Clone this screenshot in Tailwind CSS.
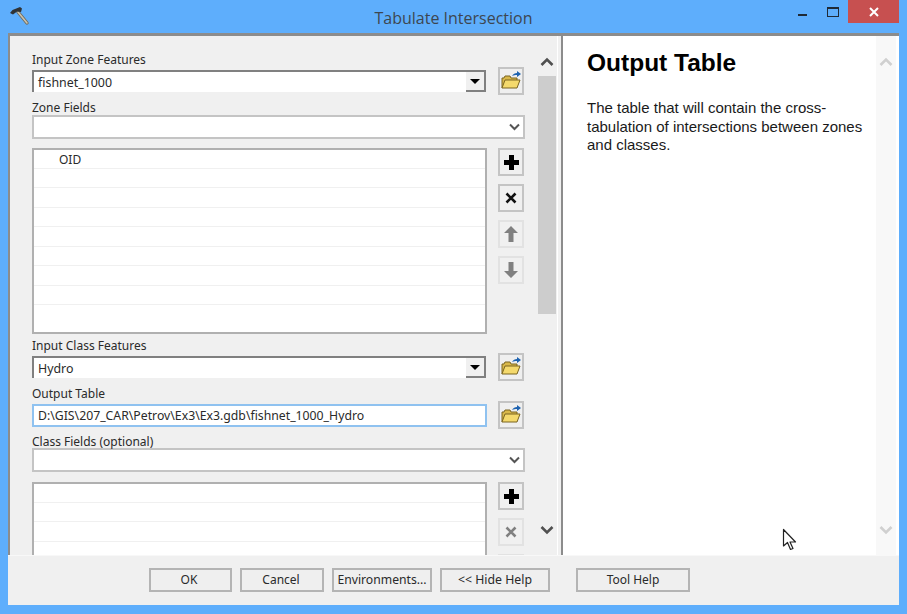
<!DOCTYPE html>
<html lang="en">
<head>
    <meta charset="UTF-8">
    <title>Tabulate Intersection</title>
    <script src="https://cdn.jsdelivr.net/npm/@tailwindcss/browser@4"></script>
</head>
<body class="bg-[#5eaefc]">
<div class="relative w-[907px] h-[614px] overflow-hidden bg-[#5eaefc] font-['Noto_Sans',sans-serif] text-[12px] text-[#2a2a2a]">

    <!-- title bar -->
    <div class="relative h-[33px] flex justify-center">
        <svg class="absolute left-[9px] top-[6px] w-[21px] h-[20px]" viewBox="0 0 21 20">
            <path d="M9 6l9 11" stroke="#6f6a5c" stroke-width="3.400" stroke-linecap="round"/>
            <path d="M9 6l9 11" stroke="#c9c4b0" stroke-width="1.600" stroke-linecap="round"/>
            <path d="M1 7l2.500-3L11 1l2 1.500L12 6 8 5.500 4 8.500z" fill="#2f3336"/>
        </svg>
        <span class="mt-[7px] font-['Open_Sans',sans-serif] text-[16px] leading-[22px] text-[#3d4650]">Tabulate Intersection</span>
        <div class="absolute left-[798px] top-[14px] w-[9px] h-[2px] bg-[#1f2a36]"></div>
        <div class="absolute left-[827px] top-[7px] w-[12px] h-[10px] border border-[#1f2a36] border-t-[2px]"></div>
        <div class="absolute left-[848px] top-0 w-[51px] h-[23px] bg-[#c75050] flex items-center justify-center">
            <svg class="w-[10px] h-[10px]" viewBox="0 0 10 10"><path d="M1 1l8 8M9 1l-8 8" stroke="#fff" stroke-width="2"/></svg>
        </div>
    </div>

    <!-- client area -->
    <div class="ml-[8px] w-[891px] h-[572px] flex flex-col bg-[#f0f0f0]">
        <div class="h-[522px] flex border-t-[3px] border-l-[2px] border-[#8c8c8c]">

            <!-- form pane -->
            <div class="w-[548px] h-[519px] flex overflow-hidden border-r border-white">
                <div class="w-[528px] pl-[22px] pt-[17px]">
                    <div class="h-[14px] leading-[14px]">Input Zone Features</div>
                    <div class="flex items-center gap-[12px] h-[28px]">
                        <div class="w-[454px] h-[22px] flex border-t-2 border-l-2 border-[#808080] bg-white">
                            <span class="flex-1 pl-[4px] text-[12.400px] leading-[21px]">fishnet_1000</span>
                            <div class="w-[20px] flex items-center justify-center bg-[#f0f0f0] border-r-2 border-b-2 border-[#808080]">
                                <div class="w-0 h-0 border-x-[5px] border-x-transparent border-t-[5px] border-t-black"></div>
                            </div>
                        </div>
                        <div class="w-[26px] h-[28px] flex items-center justify-center bg-[#efefef] border-2 border-[#c4c4c4]">
                            <svg class="w-[20px] h-[20px]" viewBox="0 0 20 20"><path d="M1 17V7h2l1-2h5l1 2h6v3" fill="#d9b84a" stroke="#7a6420"/><path d="M1 17l3-8h15l-3 8z" fill="#f4d96c" stroke="#7a6420"/><path d="M11 5c1-2 3-3 5-3V0l4 3-4 3V4c-2 0-3 0-5 1z" fill="#1d62b0"/></svg>
                        </div>
                    </div>
                    <div class="h-[14px] mt-[6px] leading-[14px]">Zone Fields</div>
                    <div class="w-[493px] h-[24px] flex items-center justify-end pr-[3px] bg-white border-2 border-[#c4c4c4]">
                        <svg class="w-[11px] h-[8px]" viewBox="0 0 11 8"><path d="M1 1.500l4.500 4.500L10 1.500" fill="none" stroke="#555" stroke-width="2"/></svg>
                    </div>
                    <div class="flex gap-[11px] mt-[9px] h-[186px]">
                        <div class="w-[455px] border-2 border-[#b0b0b0] bg-white overflow-hidden">
                            <div class="h-[18.500px] pl-[25px] leading-[20px] border-b border-[#f0f0f0]">OID</div>
                            <div class="h-[19.500px] border-b border-[#f0f0f0]"></div>
                            <div class="h-[19.500px] border-b border-[#f0f0f0]"></div>
                            <div class="h-[19.500px] border-b border-[#f0f0f0]"></div>
                            <div class="h-[19.500px] border-b border-[#f0f0f0]"></div>
                            <div class="h-[19.500px] border-b border-[#f0f0f0]"></div>
                            <div class="h-[19.500px] border-b border-[#f0f0f0]"></div>
                            <div class="h-[19.500px] border-b border-[#f0f0f0]"></div>
                        </div>
                        <div class="flex flex-col gap-[8px]">
                            <div class="w-[26px] h-[28px] flex items-center justify-center border-2 border-[#c4c4c4]">
                                <svg class="w-[17px] h-[17px]" viewBox="0 0 17 17"><path d="M8.500 1v15M1 8.500h15" stroke="#000" stroke-width="5"/></svg>
                            </div>
                            <div class="w-[26px] h-[28px] flex items-center justify-center border-2 border-[#c4c4c4]">
                                <svg class="w-[12px] h-[12px]" viewBox="0 0 12 12"><path d="M1.500 1.500l9 9M10.500 1.500l-9 9" stroke="#111" stroke-width="2.600"/></svg>
                            </div>
                            <div class="w-[26px] h-[28px] flex items-center justify-center border-2 border-[#e2e2e2]">
                                <svg class="w-[14px] h-[16px]" viewBox="0 0 14 16"><path d="M7 0l7 7H9.500v9h-5V7H0z" fill="#808080"/></svg>
                            </div>
                            <div class="w-[26px] h-[28px] flex items-center justify-center border-2 border-[#e2e2e2]">
                                <svg class="w-[14px] h-[16px]" viewBox="0 0 14 16"><path d="M7 16L0 9h4.500V0h5v9H14z" fill="#808080"/></svg>
                            </div>
                        </div>
                    </div>
                    <div class="h-[14px] mt-[5px] leading-[14px]">Input Class Features</div>
                    <div class="flex items-center gap-[12px] h-[28px]">
                        <div class="w-[454px] h-[22px] flex border-t-2 border-l-2 border-[#808080] bg-white">
                            <span class="flex-1 pl-[4px] text-[12.400px] leading-[21px]">Hydro</span>
                            <div class="w-[20px] flex items-center justify-center bg-[#f0f0f0] border-r-2 border-b-2 border-[#808080]">
                                <div class="w-0 h-0 border-x-[5px] border-x-transparent border-t-[5px] border-t-black"></div>
                            </div>
                        </div>
                        <div class="w-[26px] h-[28px] flex items-center justify-center bg-[#efefef] border-2 border-[#c4c4c4]">
                            <svg class="w-[20px] h-[20px]" viewBox="0 0 20 20"><path d="M1 17V7h2l1-2h5l1 2h6v3" fill="#d9b84a" stroke="#7a6420"/><path d="M1 17l3-8h15l-3 8z" fill="#f4d96c" stroke="#7a6420"/><path d="M11 5c1-2 3-3 5-3V0l4 3-4 3V4c-2 0-3 0-5 1z" fill="#1d62b0"/></svg>
                        </div>
                    </div>
                    <div class="h-[14px] mt-[6px] leading-[14px]">Output Table</div>
                    <div class="flex items-center gap-[11px] h-[28px]">
                        <div class="w-[455px] h-[23px] pl-[4px] text-[12.250px] leading-[19px] bg-white border-2 border-[#8fc2f0]">D:\GIS\207_CAR\Petrov\Ex3\Ex3.gdb\fishnet_1000_Hydro</div>
                        <div class="w-[26px] h-[28px] flex items-center justify-center bg-[#efefef] border-2 border-[#c4c4c4]">
                            <svg class="w-[20px] h-[20px]" viewBox="0 0 20 20"><path d="M1 17V7h2l1-2h5l1 2h6v3" fill="#d9b84a" stroke="#7a6420"/><path d="M1 17l3-8h15l-3 8z" fill="#f4d96c" stroke="#7a6420"/><path d="M11 5c1-2 3-3 5-3V0l4 3-4 3V4c-2 0-3 0-5 1z" fill="#1d62b0"/></svg>
                        </div>
                    </div>
                    <div class="h-[13px] mt-[6px] leading-[14px]">Class Fields (optional)</div>
                    <div class="w-[493px] h-[24px] flex items-center justify-end pr-[3px] bg-white border-2 border-[#c4c4c4]">
                        <svg class="w-[11px] h-[8px]" viewBox="0 0 11 8"><path d="M1 1.500l4.500 4.500L10 1.500" fill="none" stroke="#555" stroke-width="2"/></svg>
                    </div>
                    <div class="flex gap-[11px] mt-[10px] h-[186px]">
                        <div class="w-[455px] border-2 border-[#b0b0b0] bg-white overflow-hidden">
                            <div class="h-[18.500px] border-b border-[#f0f0f0]"></div>
                            <div class="h-[19.500px] border-b border-[#f0f0f0]"></div>
                            <div class="h-[19.500px] border-b border-[#f0f0f0]"></div>
                        </div>
                        <div class="flex flex-col gap-[8px]">
                            <div class="w-[26px] h-[28px] flex items-center justify-center border-2 border-[#c4c4c4]">
                                <svg class="w-[17px] h-[17px]" viewBox="0 0 17 17"><path d="M8.500 1v15M1 8.500h15" stroke="#000" stroke-width="5"/></svg>
                            </div>
                            <div class="w-[26px] h-[28px] flex items-center justify-center border-2 border-[#e2e2e2]">
                                <svg class="w-[12px] h-[12px]" viewBox="0 0 12 12"><path d="M1.500 1.500l9 9M10.500 1.500l-9 9" stroke="#808080" stroke-width="2.600"/></svg>
                            </div>
                            <div class="w-[26px] h-[28px] border-2 border-[#e2e2e2]"></div>
                        </div>
                    </div>
                </div>

                <!-- form scrollbar -->
                <div class="w-[19px] flex flex-col items-start">
                    <div class="w-[18px] h-[40px] flex items-center justify-center pt-[11px]">
                        <svg class="w-[14px] h-[10px]" viewBox="0 0 14 10"><path d="M1.500 8L7 2.500 12.500 8" fill="none" stroke="#505050" stroke-width="2.600"/></svg>
                    </div>
                    <div class="w-[18px] h-[238px] bg-[#cdcdcd]"></div>
                    <div class="w-[18px] h-[241px] flex items-center justify-center pt-[191px]">
                        <svg class="w-[14px] h-[10px]" viewBox="0 0 14 10"><path d="M1.500 2L7 7.500 12.500 2" fill="none" stroke="#505050" stroke-width="2.600"/></svg>
                    </div>
                </div>
            </div>

            <div class="w-[3px]"></div>

            <!-- help pane -->
            <div class="flex-1 h-[519px] flex bg-white border-l-2 border-[#8c8c8c]">
                <div class="w-[313px] pl-[24px] font-['Liberation_Sans',sans-serif] text-[15px] text-[#1a1a1a]">
                    <h1 class="mt-[13px] text-[24.500px] leading-[28px] font-bold text-black">Output Table</h1>
                    <p class="mt-[22px] w-[282px] leading-[18.500px]">The table that will contain the cross-tabulation of intersections between zones and classes.</p>
                </div>
                <div class="w-[20px] flex flex-col items-center justify-between pt-[21px] pb-[20px] bg-[#f8f8f8]">
                    <svg class="w-[14px] h-[10px]" viewBox="0 0 14 10"><path d="M1.500 8L7 2.500 12.500 8" fill="none" stroke="#d0d0d0" stroke-width="2.600"/></svg>
                    <svg class="w-[14px] h-[10px]" viewBox="0 0 14 10"><path d="M1.500 2L7 7.500 12.500 2" fill="none" stroke="#d0d0d0" stroke-width="2.600"/></svg>
                </div>
                <div class="w-[1px] bg-white"></div>
            </div>
        </div>

        <!-- footer buttons -->
        <div class="flex-1 flex pl-[141px] pt-[12px] border-t border-[#f8f8f8]">
            <button class="w-[83px] h-[24px] pr-[3px] border-2 border-[#b4b4b4] bg-[#efefef] text-center leading-[20px]">OK</button>
            <button class="ml-[8px] w-[84px] h-[24px] pr-[2px] border-2 border-[#b4b4b4] bg-[#efefef] text-center leading-[20px]">Cancel</button>
            <button class="ml-[8px] w-[100px] h-[24px] border-2 border-[#b4b4b4] bg-[#efefef] text-center text-[12.200px] leading-[20px]">Environments...</button>
            <button class="ml-[8px] w-[110px] h-[24px] border-2 border-[#b4b4b4] bg-[#efefef] text-center text-[12.300px] leading-[20px]">&lt;&lt; Hide Help</button>
            <button class="ml-[26px] w-[114px] h-[24px] border-2 border-[#b4b4b4] bg-[#efefef] text-center leading-[20px]">Tool Help</button>
        </div>
    </div>

    <!-- mouse pointer -->
    <svg class="absolute left-[782px] top-[528px] w-[16px] h-[24px]" viewBox="0 0 16 24">
        <path d="M1.500 1.500V18l4-3.500 3 7 2.500-1-3-6.500h5.500z" fill="#fff" stroke="#222" stroke-width="1.200" stroke-linejoin="round"/>
    </svg>
</div>
</body>
</html>
